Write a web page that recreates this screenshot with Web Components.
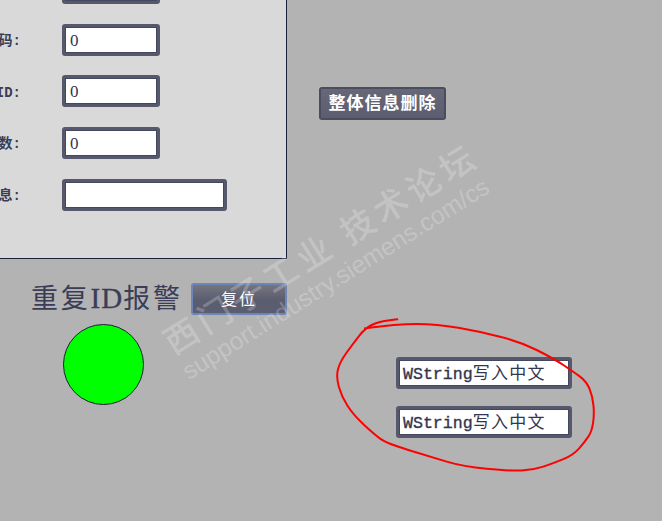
<!DOCTYPE html>
<html lang="zh">
<head>
<meta charset="utf-8">
<title>HMI</title>
<style>
  html, body { margin: 0; padding: 0; background: #b3b3b3; overflow: hidden; }
</style>
</head>
<body>
<hmi-screen>
  <hmi-panel>
    <hmi-row class="stub"></hmi-row>
    <hmi-row label="码:" value="0"></hmi-row>
    <hmi-row label="ID:" value="0"></hmi-row>
    <hmi-row label="数:" value="0"></hmi-row>
    <hmi-row label="息:" wide></hmi-row>
  </hmi-panel>
  <hmi-alarm slot="left" label="复位"><span>重复</span><span class="latin">ID</span><span>报警</span></hmi-alarm>
  <hmi-lamp slot="left"></hmi-lamp>
  <hmi-button slot="right" variant="delete">整体信息删除</hmi-button>
  <hmi-field slot="right" size="long" first><span class="m">WString</span><span class="c">写入中文</span></hmi-field>
  <hmi-field slot="right" size="long"><span class="m">WString</span><span class="c">写入中文</span></hmi-field>
</hmi-screen>

<script>
const FONT = '"Liberation Serif", "Noto Sans CJK SC", serif';
const CJK = '"Noto Sans CJK SC", sans-serif';

class HmiScreen extends HTMLElement {
  constructor() {
    super();
    this.attachShadow({ mode: 'open' }).innerHTML = `
      <style>
        :host {
          display: grid;
          grid-template-columns: 287px 1fr;
          position: relative;
          width: 662px;
          height: 521px;
          overflow: hidden;
          background: #b3b3b3;
          color: #33364f;
          font-family: ${FONT};
        }
        .left, .right { display: flex; flex-direction: column; align-items: flex-start; }
        .right { padding: 87px 0 0 32px; }
      </style>
      <div class="left"><slot></slot><slot name="left"></slot></div>
      <div class="right"><slot name="right"></slot></div>
      <hmi-watermark></hmi-watermark>
      <hmi-ink></hmi-ink>
    `;
  }
}

class HmiPanel extends HTMLElement {
  constructor() {
    super();
    this.attachShadow({ mode: 'open' }).innerHTML = `
      <style>
        :host {
          display: flex;
          flex-direction: column;
          gap: 19.67px;
          box-sizing: border-box;
          width: 287px;
          height: 259px;
          overflow: hidden;
          background: #d9d9d9;
          border-right: 1px solid #1c1f3a;
          border-bottom: 1px solid #1c1f3a;
        }
        ::slotted(.stub) { margin-top: -28px; }
      </style>
      <slot></slot>
    `;
  }
}

class HmiRow extends HTMLElement {
  constructor() {
    super();
    this.attachShadow({ mode: 'open' });
  }

  connectedCallback() {
    const label = this.getAttribute('label') || '';
    const value = this.getAttribute('value') || '';
    const size = this.hasAttribute('wide') ? 'wide' : 'short';
    this.shadowRoot.innerHTML = `
      <style>
        :host { display: flex; align-items: center; height: 32px; flex: none; }
        .label {
          box-sizing: border-box;
          width: 62px;
          height: 20px;
          padding-right: 41px;
          display: flex;
          justify-content: flex-end;
          white-space: nowrap;
          overflow: hidden;
          font: 700 14px/20px "Liberation Mono", "Noto Sans CJK SC", monospace;
          margin-top: 3px;
          color: #3a3d55;
        }
      </style>
      <div class="label">${label}</div>
      <hmi-field size="${size}">${value}</hmi-field>
    `;
  }
}

class HmiField extends HTMLElement {
  constructor() {
    super();
    this.attachShadow({ mode: 'open' }).innerHTML = `
      <style>
        :host {
          display: block;
          box-sizing: border-box;
          flex: none;
          width: 98px;
          height: 32px;
          background: #fff;
          border: 3px solid #56586b;
          border-radius: 3px;
          box-shadow: inset 0 0 0 1px #45475c;
          padding: 0 0 0 5px;
          font: 17px/27px ${FONT};
          color: #33364f;
          white-space: nowrap;
          overflow: hidden;
        }
        :host([size="wide"]) { width: 165px; }
        :host([size="long"]) { width: 176px; margin-left: 77px; margin-bottom: 17px; padding-left: 4px; line-height: 28px; }
        :host([first]) { margin-top: 237px; }
        ::slotted(.m) {
          font-family: "Liberation Mono", monospace;
          font-size: 16.6px;
          -webkit-text-stroke: 0.35px #33364f;
        }
        ::slotted(.c) { font-family: ${CJK}; font-size: 17px; line-height: 1; letter-spacing: 1.3px; }
      </style>
      <slot></slot>
    `;
  }
}

class HmiButton extends HTMLElement {
  constructor() {
    super();
    this.attachShadow({ mode: 'open' }).innerHTML = `
      <style>
        :host {
          display: flex;
          align-items: center;
          justify-content: center;
          box-sizing: border-box;
          flex: none;
          width: 96px;
          height: 32px;
          padding-bottom: 3px;
          border: 2px solid #6c86b8;
          border-radius: 3px;
          background: linear-gradient(#75757f, #5a5c6f 55%, #5b5d70);
          color: #fff;
          font: 16px/24px ${CJK};
          letter-spacing: 2px;
        }
        :host([variant="delete"]) {
          width: 127px;
          height: 33px;
          border-color: #4a4c60;
          background: linear-gradient(#666878, #5c5e70);
          font-size: 17px;
          font-weight: 700;
          letter-spacing: 1px;
        }
      </style>
      <slot></slot>
    `;
  }
}

class HmiAlarm extends HTMLElement {
  constructor() {
    super();
    const label = this.getAttribute('label');
    this.attachShadow({ mode: 'open' }).innerHTML = `
      <style>
        :host {
          display: flex;
          align-items: flex-start;
          height: 32px;
          margin-top: 24px;
          padding-left: 31px;
        }
        .title {
          width: 160px;
          height: 28px;
          white-space: nowrap;
          font: 27px/28px ${CJK};
          letter-spacing: 2.8px;
          color: #3a3d55;
        }
        ::slotted(.latin) {
          font-family: "Liberation Serif", serif;
          font-size: 29px;
          letter-spacing: 1px;
          -webkit-text-stroke: 0.3px #3a3d55;
        }
      </style>
      <div class="title"><slot></slot></div>
      <hmi-button>${label}</hmi-button>
    `;
  }
}

class HmiLamp extends HTMLElement {
  constructor() {
    super();
    this.attachShadow({ mode: 'open' }).innerHTML = `
      <style>
        :host {
          display: block;
          box-sizing: border-box;
          width: 81px;
          height: 81px;
          margin: 9px 0 0 63px;
          border-radius: 50%;
          border: 1px solid #1c1f3a;
          background: #00ff00;
        }
      </style>
    `;
  }
}

// forum watermark, over everything
class HmiWatermark extends HTMLElement {
  constructor() {
    super();
    this.attachShadow({ mode: 'open' }).innerHTML = `
      <style>
        :host {
          position: absolute;
          left: 172px;
          top: 372px;
          color: rgba(255, 255, 255, 0.24);
          transform: rotate(-32deg);
          transform-origin: 0 0;
          white-space: nowrap;
          pointer-events: none;
        }
        .cn { position: absolute; left: 10px; top: -47px; font: 500 34px/40px ${CJK}; letter-spacing: 5px; white-space: pre; }
        .en { position: absolute; left: 10px; top: -7px; font: 24.6px/30px "Liberation Sans", sans-serif; }
      </style>
      <div class="cn">西门子工业 技术论坛</div>
      <div class="en">support.industry.siemens.com/cs</div>
    `;
  }
}

// the hand drawn red ring
class HmiInk extends HTMLElement {
  constructor() {
    super();
    const pts = [[135,85],[230,72],[350,72],[480,95],[600,125],[700,175],[760,215],[800,245],[818,290],[823,345],[815,395],[795,425],[760,465],[700,490],[640,510],[570,513],[430,500],[330,470],[200,430],[165,405],[100,345],[65,290],[48,230],[60,185],[100,130],[135,85],[175,65],[232,58]];
    let d = `M${pts[0][0]} ${pts[0][1]}`;
    for (let i = 1; i < pts.length - 1; i++) {
      const mx = (pts[i][0] + pts[i + 1][0]) / 2;
      const my = (pts[i][1] + pts[i + 1][1]) / 2;
      d += ` Q${pts[i][0]} ${pts[i][1]} ${mx} ${my}`;
    }
    d += ` L232 58`;
    this.attachShadow({ mode: 'open' }).innerHTML = `
      <style>
        :host { position: absolute; left: 320px; top: 300px; width: 300px; height: 190px; pointer-events: none; }
        svg { display: block; }
      </style>
      <svg width="300" height="190" viewBox="0 0 900 570" fill="none">
        <path d="${d}" stroke="#ff0000" stroke-width="6" stroke-linecap="round" stroke-linejoin="round"/>
      </svg>
    `;
  }
}

customElements.define('hmi-screen', HmiScreen);
customElements.define('hmi-panel', HmiPanel);
customElements.define('hmi-row', HmiRow);
customElements.define('hmi-field', HmiField);
customElements.define('hmi-button', HmiButton);
customElements.define('hmi-alarm', HmiAlarm);
customElements.define('hmi-lamp', HmiLamp);
customElements.define('hmi-watermark', HmiWatermark);
customElements.define('hmi-ink', HmiInk);
</script>
</body>
</html>
